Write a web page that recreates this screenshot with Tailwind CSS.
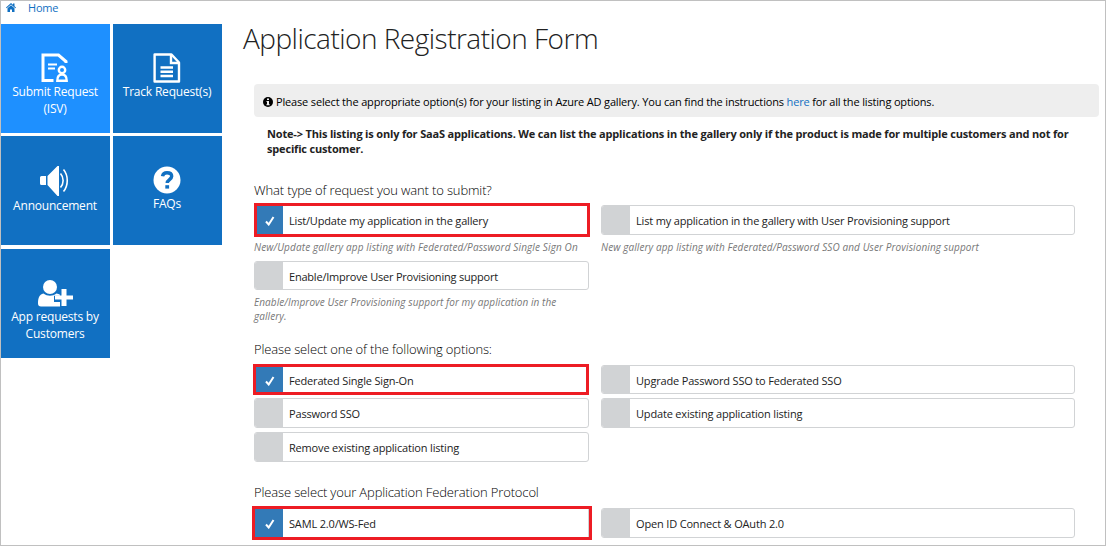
<!DOCTYPE html>
<html lang="en">
<head>
<meta charset="utf-8">
<title>Application Registration Form</title>
<script src="https://cdn.jsdelivr.net/npm/@tailwindcss/browser@4"></script>
</head>
<body class="bg-white">
<div class="w-[1106px] h-[546px] border border-[#c0c0c0] overflow-hidden font-['Open_Sans','Noto_Sans',sans-serif] text-[#222] whitespace-nowrap">
  <header class="h-[23px] flex items-start pl-[5px] text-[#1170c2]">
    <svg class="w-[10px] h-[9px] mt-[2px] mr-[12px]" viewBox="0 0 20 18" fill="currentColor"><path d="M10 0 0 9l1.300 1.500L10 3l8.700 7.500L20 9l-3-2.700V1h-3v2.600z"/><path d="M10 4.500 3 10.500V18h5v-5h4v5h5v-7.500z"/></svg>
    <a class="text-[11px] leading-[13px] tracking-[-0.200px]">Home</a>
  </header>
  <div class="flex">
    <nav class="w-[221px] shrink-0 grid grid-cols-[109px_109px] grid-rows-[109px_110px_109px] gap-[3px] text-white text-[12px] leading-[17px] tracking-[-0.200px] text-center">
      <a class="h-[109px] bg-[#1e90ff] flex flex-col items-center pt-[29px] pr-px">
        <svg class="w-[28px] h-[30px]" viewBox="0 0 28 30" fill="none" stroke="#fff"><path d="M12.500 27.500H2V2H17.500l7.500 6.500v1.500" stroke-width="3"/><path d="M7 11.500h9M7 15.500h7" stroke-width="2"/><circle cx="21" cy="17" r="3.200" stroke-width="2.400"/><path d="M16.300 27.800c0-4 2-6.300 4.700-6.300s4.700 2.300 4.700 6.300z" stroke-width="2.400"/></svg>
        <span>Submit Request</span><span>(ISV)</span>
      </a>
      <a class="h-[109px] bg-[#1170c2] flex flex-col items-center pt-[29px] pr-px">
        <svg class="w-[28px] h-[30px]" viewBox="0 0 28 30" fill="none" stroke="#fff" stroke-width="2.400"><path d="M1.600 1.500h16.900l7.500 8v19H1.600z" stroke-linejoin="round"/><path d="M18 2v8h8M7.500 14.500H20M7.500 18.800H20M7.500 23H20"/></svg>
        <span>Track Request(s)</span>
      </a>
      <a class="h-[109px] bg-[#1170c2] flex flex-col items-center pt-[29px] pr-px">
        <svg class="w-[30px] h-[31px] mr-[2px] mb-px" viewBox="0 0 30 31" fill="#fff"><path d="M2.500 11H7v9H2.500Q1 20 1 18.500v-6Q1 11 2.500 11zM8.500 11l10-10H20v30h-1.500L8.500 20z"/><path d="M21.500 8.500c3.500 4 3.500 10 0 14M24.500 4.500c5 6 5 16 0 22" fill="none" stroke="#fff" stroke-width="1.600"/></svg>
        <span>Announcement</span>
      </a>
      <a class="h-[109px] bg-[#1170c2] flex flex-col items-center pt-[30px] pr-px">
        <svg class="w-[28px] h-[28px] mb-px" viewBox="0 0 28 28"><circle cx="14" cy="14" r="13.500" fill="#fff"/><path d="M9.500 10.300C10 7.500 11.800 6.700 14 6.700c2.700 0 4.700 1.300 4.700 3.600 0 3.200-4.500 3.300-4.500 6.700" fill="none" stroke="#1170c2" stroke-width="3.400"/><path d="M12.300 19.200h3.800v3.400h-3.800z" fill="#1170c2"/></svg>
        <span>FAQs</span>
      </a>
      <a class="h-[109px] bg-[#1170c2] flex flex-col items-center pt-[30px] pr-px">
        <svg class="w-[36px] h-[29px]" viewBox="0 0 36 29" fill="#fff"><circle cx="13" cy="8" r="7"/><path d="M6.500 14.500c4 3 9 3 13 0 1.500.2 2.500.6 3.500 1.200v1h-6v6.300h6v4.500H4c-2 0-3-1-3-3 0-5 1-9 5.500-10z"/><path d="M24.500 10h5v6.500h6.500v4h-6.500v6.500h-5v-6.500H18v-4h6.500z"/></svg>
        <span>App requests by</span><span>Customers</span>
      </a>
    </nav>
    <main class="pl-[21px]">
      <h1 class="h-[60px] text-[28px] leading-[29px] font-light tracking-[-0.510px]">Application Registration Form</h1>
      <div class="ml-[11px]">
        <div class="w-[845px] h-[33px] rounded-[4px] bg-[#eee] flex items-center pl-[9px] pt-[3px] text-[11px] tracking-[-0.163px] text-black">
          <svg class="w-[10px] h-[10px] mr-[3px]" viewBox="0 0 10 10"><circle cx="5" cy="5" r="5" fill="#000"/><path d="M4 1.500h2v1.500H4zM3.500 4H6v3.200h.7v1H3.400v-1H4V5h-.5z" fill="#eee"/></svg>
          <p>Please select the appropriate option(s) for your listing in Azure AD gallery. You can find the instructions <a class="text-[#1170c2]">here</a> for all the listing options.</p>
        </div>
        <p class="ml-[13px] mt-[9px] text-[11px] leading-[15px] tracking-[-0.175px] font-bold">Note-&gt; This listing is only for SaaS applications. We can list the applications in the gallery only if the product is made for multiple customers and not for<br>specific customer.</p>

        <h2 class="mt-[24px] h-[25px] text-[13px] leading-[20px] tracking-[-0.140px] font-light text-black">What type of request you want to submit?</h2>
        <div class="grid grid-cols-[335px_474px] gap-x-[12px] text-[11px] tracking-[-0.175px]">
          <div>
            <div class="relative h-[30px] flex">
              <div class="w-[29px] bg-[#337ab7] flex items-center justify-center"><svg class="w-[10px] h-[10px] ml-[3px] mt-[2px]" viewBox="0 0 10 10" fill="none" stroke="#fff" stroke-width="2"><path d="M1 5.500 3.700 8.500 8.500 1"/></svg></div>
              <span class="pl-[6px] leading-[32px]">List/Update my application in the gallery</span>
              <div class="absolute left-0 -top-[2px] w-[336px] h-[34px] border-[3px] border-[#ed1c24]"></div>
            </div>
            <p class="pt-[5px] pb-[7px] text-[10px] leading-[14px] tracking-[0.130px] italic text-[#777]">New/Update gallery app listing with Federated/Password Single Sign On</p>
            <div class="h-[29px] flex rounded-[3px] border border-[#d1d3d5] overflow-hidden">
              <div class="w-[28px] bg-[#d1d3d5]"></div>
              <span class="pl-[6px] leading-[30px] tracking-[-0.210px]">Enable/Improve User Provisioning support</span>
            </div>
            <p class="pt-[5px] text-[10px] leading-[14px] tracking-[0.080px] italic text-[#777]">Enable/Improve User Provisioning support for my application in the<br>gallery.</p>
          </div>
          <div>
            <div class="h-[30px] flex rounded-[3px] border border-[#d1d3d5] overflow-hidden">
              <div class="w-[28px] bg-[#d1d3d5]"></div>
              <span class="pl-[6px] leading-[30px]">List my application in the gallery with User Provisioning support</span>
            </div>
            <p class="pt-[5px] text-[10px] leading-[14px] tracking-[0.100px] italic text-[#777]">New gallery app listing with Federated/Password SSO and User Provisioning support</p>
          </div>
        </div>

        <h2 class="mt-[17px] h-[25px] text-[13px] leading-[19px] tracking-[-0.140px] font-light text-black">Please select one of the following options:</h2>
        <div class="grid grid-cols-[335px_474px] grid-rows-[29px_30px_30px] gap-x-[12px] gap-y-[4px] text-[11px] tracking-[-0.175px]">
          <div class="relative flex">
            <div class="w-[29px] bg-[#337ab7] flex items-center justify-center"><svg class="w-[10px] h-[10px] ml-[3px] mt-[2px]" viewBox="0 0 10 10" fill="none" stroke="#fff" stroke-width="2"><path d="M1 5.500 3.700 8.500 8.500 1"/></svg></div>
            <span class="pl-[6px] leading-[32px]">Federated Single Sign-On</span>
            <div class="absolute -left-px -top-px w-[336px] h-[31px] border-[3px] border-[#ed1c24]"></div>
          </div>
          <div class="flex rounded-[3px] border border-[#d1d3d5] overflow-hidden">
            <div class="w-[28px] bg-[#d1d3d5]"></div><span class="pl-[6px] leading-[30px]">Upgrade Password SSO to Federated SSO</span>
          </div>
          <div class="flex rounded-[3px] border border-[#d1d3d5] overflow-hidden">
            <div class="w-[28px] bg-[#d1d3d5]"></div><span class="pl-[6px] leading-[30px]">Password SSO</span>
          </div>
          <div class="flex rounded-[3px] border border-[#d1d3d5] overflow-hidden">
            <div class="w-[28px] bg-[#d1d3d5]"></div><span class="pl-[6px] leading-[30px]">Update existing application listing</span>
          </div>
          <div class="flex rounded-[3px] border border-[#d1d3d5] overflow-hidden">
            <div class="w-[28px] bg-[#d1d3d5]"></div><span class="pl-[6px] leading-[30px]">Remove existing application listing</span>
          </div>
        </div>

        <h2 class="mt-[20px] h-[26px] text-[13px] leading-[20px] tracking-[-0.140px] font-light text-black">Please select your Application Federation Protocol</h2>
        <div class="grid grid-cols-[335px_474px] grid-rows-[30px] gap-x-[12px] text-[11px] tracking-[-0.165px]">
          <div class="relative flex">
            <div class="w-[29px] bg-[#337ab7] flex items-center justify-center"><svg class="w-[10px] h-[10px] ml-[3px] mt-[2px]" viewBox="0 0 10 10" fill="none" stroke="#fff" stroke-width="2"><path d="M1 5.500 3.700 8.500 8.500 1"/></svg></div>
            <span class="grow pl-[6px] leading-[32px] border-r border-[#d1d3d5]">SAML 2.0/WS-Fed</span>
            <div class="absolute -left-[2px] -top-[2px] w-[340px] h-[34px] border-[3px] border-[#ed1c24]"></div>
          </div>
          <div class="flex rounded-[3px] border border-[#d1d3d5] overflow-hidden">
            <div class="w-[28px] bg-[#d1d3d5]"></div><span class="pl-[6px] leading-[30px]">Open ID Connect &amp; OAuth 2.0</span>
          </div>
        </div>
      </div>
    </main>
  </div>
</div>
</body>
</html>
